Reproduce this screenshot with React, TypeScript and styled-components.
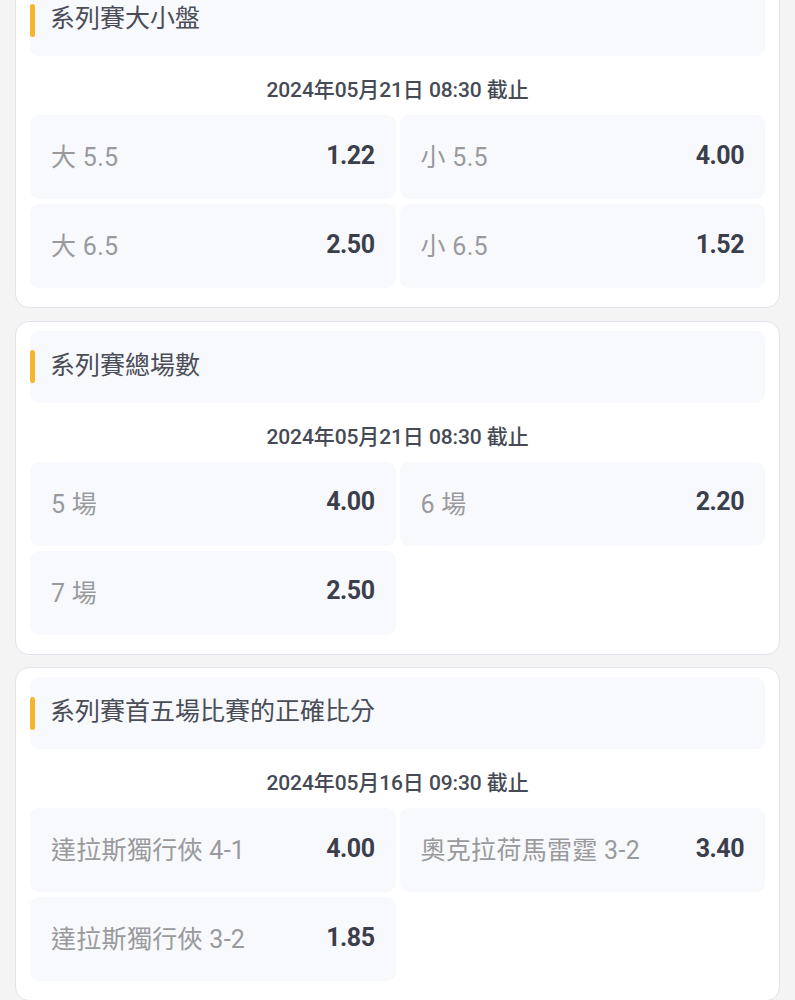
import React from "react";
import styled, { createGlobalStyle } from "styled-components";

const GlobalStyle = createGlobalStyle`
  html, body {
    margin: 0;
    padding: 0;
    background: #f4f4f5;
  }
  body {
    font-family: Roboto, "Noto Sans CJK TC", "Noto Sans", sans-serif;
    overflow: hidden;
  }
`;

type Odd = { label: string; value: string };
type Market = { title: string; deadline: string; odds: Odd[] };

const markets: Market[] = [
  {
    title: "系列賽大小盤",
    deadline: "2024年05月21日 08:30 截止",
    odds: [
      { label: "大 5.5", value: "1.22" },
      { label: "小 5.5", value: "4.00" },
      { label: "大 6.5", value: "2.50" },
      { label: "小 6.5", value: "1.52" },
    ],
  },
  {
    title: "系列賽總場數",
    deadline: "2024年05月21日 08:30 截止",
    odds: [
      { label: "5 場", value: "4.00" },
      { label: "6 場", value: "2.20" },
      { label: "7 場", value: "2.50" },
    ],
  },
  {
    title: "系列賽首五場比賽的正確比分",
    deadline: "2024年05月16日 09:30 截止",
    odds: [
      { label: "達拉斯獨行俠 4-1", value: "4.00" },
      { label: "奧克拉荷馬雷霆 3-2", value: "3.40" },
      { label: "達拉斯獨行俠 3-2", value: "1.85" },
    ],
  },
];

const App = () => {
  return (
    <>
      <GlobalStyle />
      <List>
        {markets.map((m) => (
          <Card key={m.title}>
            <Header>
              <Bar />
              <Title>{m.title}</Title>
            </Header>
            <Deadline>{m.deadline}</Deadline>
            <Grid>
              {m.odds.map((o) => (
                <Cell key={o.label}>
                  <Label>{o.label}</Label>
                  <Value>{o.value}</Value>
                </Cell>
              ))}
            </Grid>
          </Card>
        ))}
      </List>
    </>
  );
};

export default App;

const List = styled.div`
  display: flex;
  flex-direction: column;
  gap: 12.5px;
  padding: 0 15px;
  margin-top: -26px;
`;

const Card = styled.div`
  background: #ffffff;
  border: 1px solid #dfe4eb;
  border-radius: 14px;
  padding: 9px 14px 19px;
`;

const Header = styled.div`
  display: flex;
  align-items: center;
  height: 72px;
  background: #f8f9fd;
  border-radius: 9px;
`;

const Bar = styled.span`
  width: 5px;
  height: 33px;
  border-radius: 3px;
  background: #f5b52e;
`;

const Title = styled.h2`
  margin: 0 0 0 15px;
  font-size: 25px;
  font-weight: 400;
  color: #4a4d57;
  line-height: 1;
  padding-bottom: 3px;
`;

const Deadline = styled.div`
  text-align: center;
  font-size: 21px;
  font-weight: 500;
  color: #464a55;
  line-height: 20px;
  padding: 24px 0 15px;
  letter-spacing: -0.1px;
`;

const Grid = styled.div`
  display: grid;
  grid-template-columns: 1fr 1fr;
  column-gap: 4px;
  row-gap: 5px;
`;

const Cell = styled.div`
  display: flex;
  align-items: center;
  justify-content: space-between;
  height: 84px;
  padding: 0 21px 4px;
  box-sizing: border-box;
  background: #f8f9fc;
  border-radius: 9px;
`;

const Label = styled.span`
  font-size: 25px;
  color: #9a9a9c;
  letter-spacing: 0.3px;
`;

const Value = styled.span`
  font-size: 25px;
  font-weight: 700;
  color: #3b3e4b;
  letter-spacing: -0.5px;
`;
